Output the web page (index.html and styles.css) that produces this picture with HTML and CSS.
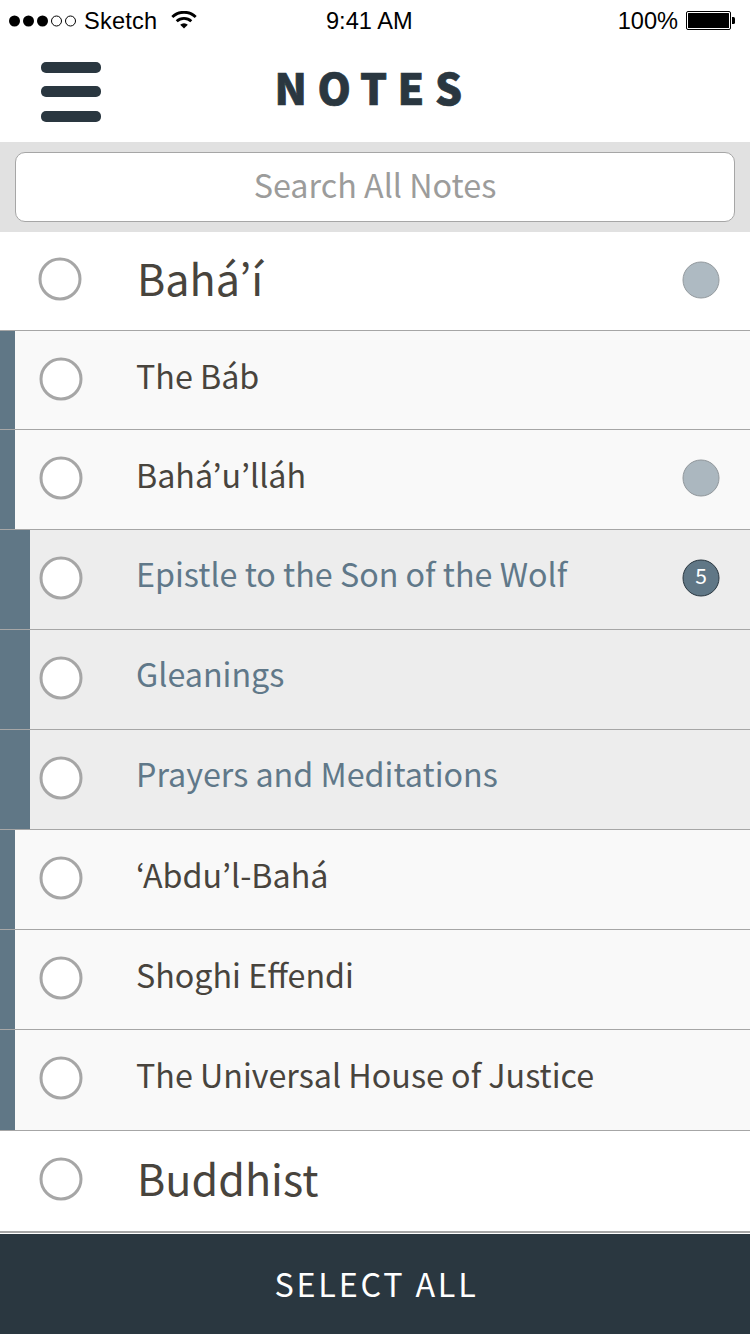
FILE: index.html
```html
<!DOCTYPE html>
<html lang="en">
<head>
<meta charset="utf-8">
<title>Notes</title>
<link rel="stylesheet" href="styles.css">
</head>
<body>
<svg class="defs" width="0" height="0"><symbol id="radio" viewBox="0 0 44 44"><circle cx="22" cy="22" r="20"/></symbol><symbol id="dot" viewBox="0 0 38 38"><circle cx="19" cy="19" r="18"/></symbol></svg>
<div class="status">
  <div class="carrier">
    <svg width="68" height="12" viewBox="0 0 68 12"><circle cx="5.5" cy="6" r="5.5"/><circle cx="19.5" cy="6" r="5.5"/><circle cx="33.5" cy="6" r="5.5"/><circle class="hollow" cx="47.5" cy="6" r="5"/><circle class="hollow" cx="61.5" cy="6" r="5"/></svg>
    <span class="carrier-name">Sketch</span>
    <svg class="wifi" width="26" height="18" viewBox="0 0 26 18"><path d="M13 17.600 16.800 13.800A5.400 5.400 0 0 0 9.200 13.800Z"/><path class="arc" d="M5.700 10.300A10.600 10.600 0 0 1 20.300 10.300M1.300 5.900A17 17 0 0 1 24.700 5.900"/></svg>
  </div>
  <span class="time">9:41 AM</span>
  <div class="power"><span class="percent">100%</span>
    <svg class="battery" width="49" height="19" viewBox="0 0 49 19"><rect class="shell" x=".5" y=".5" width="44" height="18" rx="1.5"/><rect x="2" y="2" width="41" height="15" rx=".5"/><path d="M46 6h1.500q1.500 0 1.500 1.500v4q0 1.500-1.500 1.500H46z"/></svg></div>
</div>
<header class="header">
  <button class="menu" aria-label="Menu"><span class="bar"></span><span class="bar"></span><span class="bar"></span></button>
  <h1 class="title">NOTES</h1>
</header>
<div class="search"><div class="field">Search All Notes</div></div>
<main class="list">
  <div class="row group first"><svg class="radio"><use href="#radio"/></svg><span class="label">Bahá’í</span><svg class="badge dim"><use href="#dot"/></svg></div>
  <div class="row sub short"><svg class="radio"><use href="#radio"/></svg><span class="label">The Báb</span></div>
  <div class="row sub"><svg class="radio"><use href="#radio"/></svg><span class="label">Bahá’u’lláh</span><svg class="badge dim"><use href="#dot"/></svg></div>
  <div class="row leaf"><svg class="radio"><use href="#radio"/></svg><span class="label">Epistle to the Son of the Wolf</span><svg class="badge"><use href="#dot"/><text class="count" x="19" y="25">5</text></svg></div>
  <div class="row leaf"><svg class="radio"><use href="#radio"/></svg><span class="label">Gleanings</span></div>
  <div class="row leaf"><svg class="radio"><use href="#radio"/></svg><span class="label">Prayers and Meditations</span></div>
  <div class="row sub"><svg class="radio"><use href="#radio"/></svg><span class="label">‘Abdu’l-Bahá</span></div>
  <div class="row sub"><svg class="radio"><use href="#radio"/></svg><span class="label">Shoghi Effendi</span></div>
  <div class="row sub tall"><svg class="radio"><use href="#radio"/></svg><span class="label">The Universal House of Justice</span></div>
  <div class="row group last"><svg class="radio"><use href="#radio"/></svg><span class="label">Buddhist</span></div>
</main>
<footer class="select-all">SELECT ALL</footer>
</body>
</html>
```
FILE: styles.css
```css
* { box-sizing: border-box; }
body { margin: 0; width: 750px; height: 1334px; overflow: hidden; display: flex; flex-direction: column; background: #fff; font-family: "Noto Sans CJK KR", sans-serif; color: #48443d; }
.defs { flex: none; }
.status { height: 40px; flex: none; display: grid; grid-template-columns: 317px auto 1fr; align-items: center; padding: 2px 15px 0 9px; font: 23.6px/38px "Liberation Sans", sans-serif; color: #000; }
.carrier, .power { display: flex; align-items: center; }
.power { justify-content: flex-end; gap: 8px; }
.carrier-name { margin: 0 14px 0 7px; letter-spacing: .2px; }
.wifi, .battery { margin-bottom: 2px; }
.hollow { fill: none; stroke: #000; }
.arc { fill: none; stroke: #000; stroke-width: 2.8; }
.shell { fill: none; stroke: #000; }
.header { height: 102px; flex: none; display: grid; grid-template-columns: 60px 1fr 60px; padding: 0 41px; }
.menu { margin: 22px 0 0; padding: 0; border: 0; background: none; height: 60px; display: flex; flex-direction: column; }
.bar { width: 60px; height: 11px; flex: none; border-radius: 5px; background: #2a3740; margin-bottom: 12.5px; }
.bar + .bar { margin-bottom: 14.5px; }
.title { margin: 0; padding-right: 3px; text-align: center; font-size: 42.5px; line-height: 94px; font-weight: 900; letter-spacing: 10.5px; color: #2a3740; -webkit-text-stroke: .7px #2a3740; }
.search { height: 90px; flex: none; padding: 10px 15px; background: #e1e1e1; }
.field { height: 70px; border: 1px solid #a6a6a6; border-radius: 10px; background: #fff; text-align: center; font-size: 32.3px; line-height: 62px; color: #9c9c9b; }
.list { flex: none; }
.row { height: 100px; display: flex; align-items: flex-start; border-bottom: 1px solid #a6a6a6; padding: 0 30px 0 39px; }
.radio { width: 44px; height: 44px; flex: none; margin-top: 26px; fill: #fff; stroke: #a6a6a6; stroke-width: 3px; }
.label { flex: 1; padding-left: 53px; font-size: 32.25px; line-height: 88px; white-space: nowrap; }
.group .label { padding-left: 54px; font-size: 43.1px; line-height: 92px; }
.first { height: 99px; padding-left: 38px; }
.first .radio { margin-top: 25px; }
.first .label { padding-left: 55px; line-height: 90px; }
.short { height: 99px; }
.tall { height: 101px; }
.last { height: 102px; border-bottom-width: 2px; }
.sub { background: #f9f9f9; box-shadow: inset 15px 0 #607786; }
.leaf { background: #ededed; box-shadow: inset 30px 0 #607786; color: #607889; }
.leaf .label { line-height: 86px; }
.badge { width: 38px; height: 38px; flex: none; margin-top: 29px; fill: #607786; stroke: #2a3740; stroke-width: 1px; }
.count { fill: #fff; stroke: none; font-size: 21px; text-anchor: middle; }
.dim { opacity: .5; }
.select-all { height: 100px; flex: none; margin-top: auto; padding-left: 3px; background: #2a3740; color: #fff; text-align: center; font-size: 32.3px; line-height: 98px; letter-spacing: 2.8px; }
```
